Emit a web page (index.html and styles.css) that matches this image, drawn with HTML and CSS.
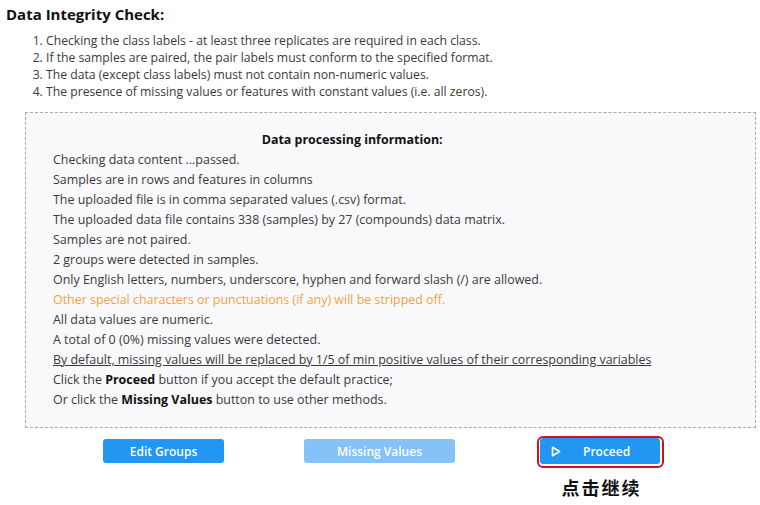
FILE: index.html
```html
<!DOCTYPE html>
<html>
<head>
<meta charset="utf-8">
<link rel="stylesheet" href="styles.css">
</head>
<body>
<h1 class="title">Data Integrity Check:</h1>
<ol class="rules">
  <li>Checking the class labels - at least three replicates are required in each class.</li>
  <li>If the samples are paired, the pair labels must conform to the specified format.</li>
  <li>The data (except class labels) must not contain non-numeric values.</li>
  <li>The presence of missing values or features with constant values (i.e. all zeros).</li>
</ol>
<div class="panel">
  <div class="info">
    <div class="info-head">Data processing information:</div>
    <div class="line">Checking data content ...passed.</div>
    <div class="line">Samples are in rows and features in columns</div>
    <div class="line">The uploaded file is in comma separated values (.csv) format.</div>
    <div class="line">The uploaded data file contains 338 (samples) by 27 (compounds) data matrix.</div>
    <div class="line">Samples are not paired.</div>
    <div class="line">2 groups were detected in samples.</div>
    <div class="line">Only English letters, numbers, underscore, hyphen and forward slash (/) are allowed.</div>
    <div class="line warn">Other special characters or punctuations (if any) will be stripped off.</div>
    <div class="line">All data values are numeric.</div>
    <div class="line">A total of 0 (0%) missing values were detected.</div>
    <div class="line under">By default, missing values will be replaced by 1/5 of min positive values of their corresponding variables</div>
    <div class="line">Click the <b>Proceed</b> button if you accept the default practice;</div>
    <div class="line">Or click the <b>Missing Values</b> button to use other methods.</div>
  </div>
</div>
<div class="actions">
  <button class="btn btn-edit">Edit Groups</button>
  <button class="btn btn-missing">Missing Values</button>
  <div class="proceed-col">
    <div class="highlight">
      <button class="btn btn-proceed">
        <svg class="play" width="10" height="11" viewBox="0 0 10 11"><path d="M1.5 1.2 L8.6 5.5 L1.5 9.8 Z" fill="none" stroke="#fff" stroke-width="1.6" stroke-linejoin="round"/></svg>
        <span class="btn-label">Proceed</span>
      </button>
    </div>
    <div class="note">点击继续</div>
  </div>
</div>
</body>
</html>
```
FILE: styles.css
```css
* { box-sizing: border-box; }
body {
  margin: 0;
  background: #fff;
  font-family: "Open Sans", "Noto Sans", sans-serif;
  color: #3a3a3a;
}
.title {
  margin: 0;
  padding: 5px 0 0 6px;
  font-size: 15px;
  line-height: 18px;
  font-weight: 700;
  color: #111;
}
.rules {
  margin: 9px 0 0 0;
  padding: 0 0 0 46px;
  font-size: 12.2px;
  line-height: 17px;
  color: #3a3a3a;
}
.panel {
  margin: 12px 4px 0 25px;
  border: 1px dashed #aaa;
  background: #f9f9fb;
  height: 316px;
  padding: 18px 0 0 27px;
}
.info {
  display: inline-block;
  font-size: 12.45px;
}
.info-head {
  text-align: center;
  font-weight: 700;
  color: #111;
  line-height: 17px;
  margin-bottom: 2px;
}
.line {
  line-height: 20px;
  color: #3a3a3a;
  white-space: nowrap;
}
.line b { color: #111; }
.warn { color: #f7a13c; }
.under { text-decoration: underline; }
.actions {
  display: flex;
  align-items: flex-start;
  padding: 8px 0 0 103px;
}
.btn {
  font-family: "Open Sans", "Noto Sans", sans-serif;
  font-size: 12px;
  font-weight: 600;
  color: #fff;
  border: none;
  border-radius: 3px;
  height: 24px;
  padding: 0;
  margin-top: 3px;
}
.btn-edit {
  width: 121px;
  background: #2196f3;
}
.btn-missing {
  width: 151px;
  margin-left: 80px;
  background: #84c2f8;
}
.proceed-col {
  margin-left: 82px;
  display: flex;
  flex-direction: column;
  align-items: center;
}
.highlight {
  border: 2px solid #d0101e;
  border-radius: 6px;
  padding: 0 2px 2px 1px;
}
.btn-proceed {
  width: 120px;
  height: 26px;
  background: #2196f3;
  display: flex;
  align-items: center;
  padding-left: 11px;
  margin-top: 0;
}
.play { display: block; }
.btn-label {
  margin-left: 22px;
}
.note {
  margin-top: 9px;
  font-family: "Noto Sans CJK SC", sans-serif;
  font-weight: 700;
  font-size: 18px;
  line-height: 20px;
  color: #111;
  letter-spacing: 2px;
  padding-left: 2px;
}
```
